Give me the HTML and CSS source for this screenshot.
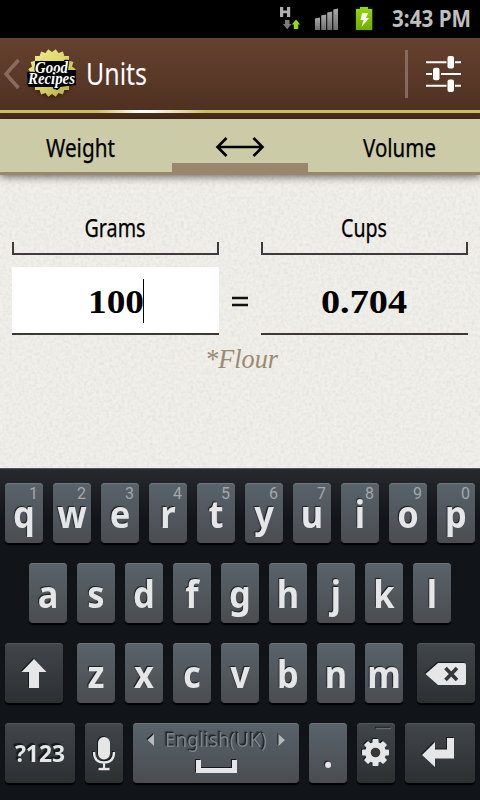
FILE: index.html
```
<!DOCTYPE html>
<html lang="en">
<head>
<meta charset="utf-8">
<title>Units</title>
<link rel="stylesheet" href="styles.css">
</head>
<body>
<div class="phone">
  <header class="status">
    <svg class="status-icons" width="112" height="38" viewBox="272 0 112 38">
      <defs>
        <linearGradient id="bars" x1="0" y1="0" x2="0" y2="1"><stop offset="0" stop-color="#aaa"/><stop offset="1" stop-color="#6e6e6e"/></linearGradient>
        <linearGradient id="batt" x1="0" y1="0" x2="0" y2="1"><stop offset="0" stop-color="#96d80c"/><stop offset="1" stop-color="#6fae00"/></linearGradient>
        <filter id="glow" x="-50%" y="-50%" width="200%" height="200%"><feGaussianBlur stdDeviation="1.500"/></filter>
      </defs>
      <path d="M280 7h3.200v3.600h3.800v-3.600h3.200v10h-3.200v-3.700h-3.800v3.700h-3.200z" fill="#b0b0b0"/>
      <path d="M285 20h4.500v4h2l-4.300 5.300-4.300-5.300h2.100z" fill="#7b7b7b"/>
      <path d="M296 19.500l4.200 5h-2v4.500h-4.400v-4.500h-2z" fill="#94dd00"/>
      <g fill="url(#bars)"><path d="M315 18.500l5-1v12.500h-5z"/><path d="M321.200 15.500l5-1v15.500h-5z"/><path d="M327.200 12.500l5-1v18.500h-5z"/><path d="M333.300 9.500l4.700-1v21.500h-4.700z"/></g>
      <rect x="356" y="8" width="16" height="22" fill="#5d9500" opacity=".4" filter="url(#glow)"/>
      <path d="M360 7h8v2h4.200v21h-16.200v-21h4z" fill="url(#batt)"/>
      <path d="M362 13h6l-2 5h3l-7.500 9 2-7h-3z" fill="#fff"/>
    </svg>
    <svg class="clock" width="96" height="38"><text x="8" y="27" textLength="79" lengthAdjust="spacingAndGlyphs">3:43 PM</text></svg>
  </header>

  <nav class="appbar">
    <svg class="home" width="84" height="72" viewBox="0 38 84 72">
      <defs>
        <linearGradient id="seal" x1="0" y1="0" x2="1" y2="1"><stop offset="0" stop-color="#f4ee98"/><stop offset=".5" stop-color="#dcd665"/><stop offset="1" stop-color="#aaa43c"/></linearGradient>
        <clipPath id="teeth">
          <rect x="35" y="56" width="34" height="34"/>
          <rect x="35" y="56" width="34" height="34" transform="rotate(18 52 73)"/>
          <rect x="35" y="56" width="34" height="34" transform="rotate(36 52 73)"/>
          <rect x="35" y="56" width="34" height="34" transform="rotate(54 52 73)"/>
          <rect x="35" y="56" width="34" height="34" transform="rotate(72 52 73)"/>
        </clipPath>
      </defs>
      <path d="M18.500 60l-12.500 14 12.500 14" fill="none" stroke="#886b5f" stroke-width="3.600"/>
      <circle cx="52" cy="76" r="22" fill="#2a1608" opacity=".5" filter="url(#glow)"/>
      <rect x="27" y="48" width="50" height="50" fill="url(#seal)" clip-path="url(#teeth)"/>
      <g class="brand">
        <path d="M36 62h31v9h8v13l-15 2-3 3-4-3H29l-1-13h8z" fill="#000" stroke="#000" stroke-width="2" stroke-linejoin="round"/>
        <text x="35" y="72.500" textLength="33" lengthAdjust="spacingAndGlyphs">Good</text>
        <text x="28" y="83.500" textLength="47" lengthAdjust="spacingAndGlyphs">Recipes</text>
      </g>
    </svg>
    <svg class="title" width="80" height="72"><text x="0" y="46.500" textLength="61" lengthAdjust="spacingAndGlyphs">Units</text></svg>
    <span class="divider"></span>
    <svg class="filter" width="36" height="38" viewBox="425 55 36 38">
      <path d="M426 62.200h20.500M455 62.200h6M426 74h6M441 74h20M426 85.800h20.500M455 85.800h6" stroke="#fff" stroke-width="2"/>
      <g fill="#fff"><rect x="447.500" y="56" width="6.500" height="12.500" rx="2"/><rect x="433" y="67.800" width="6.500" height="12.500" rx="2"/><rect x="447.500" y="79.500" width="6.500" height="12.500" rx="2"/></g>
    </svg>
  </nav>
  <div class="shine"></div>

  <section class="tabs">
    <div class="tab"><svg width="72" height="53"><text x="1" y="37.500" textLength="69" lengthAdjust="spacingAndGlyphs">Weight</text></svg></div>
    <div class="tab swap"><svg width="50" height="22" viewBox="0 0 50 22"><path d="M3 11h44M11.500 2l-9 9 9 9M38.500 2l9 9-9 9" fill="none" stroke="#000" stroke-width="2.600"/></svg></div>
    <div class="tab"><svg width="76" height="53"><text x="1" y="37.500" textLength="73" lengthAdjust="spacingAndGlyphs">Volume</text></svg></div>
  </section>

  <main class="converter">
    <svg class="paper" width="480" height="293">
      <filter id="grain" x="0" y="0" width="100%" height="100%"><feTurbulence type="fractalNoise" baseFrequency=".32" numOctaves="3" seed="4"/><feColorMatrix values="0 0 0 0 .5  0 0 0 0 .49  0 0 0 0 .45  .4 .2 0 0 -.24"/></filter>
      <rect width="480" height="293" filter="url(#grain)"/>
    </svg>
    <div class="row">
      <div class="unit"><svg width="66" height="42"><text x="1.500" y="27" textLength="61" lengthAdjust="spacingAndGlyphs">Grams</text></svg></div>
      <div class="unit"><svg width="48" height="42"><text x="0" y="27" textLength="46" lengthAdjust="spacingAndGlyphs">Cups</text></svg></div>
    </div>
    <div class="row values">
      <div class="value active"><svg width="56" height="66"><text x="0" y="46" textLength="56" lengthAdjust="spacingAndGlyphs">100</text></svg><i class="caret"></i></div>
      <svg class="equals" width="18" height="66"><path d="M1 31h16M1 38h16" stroke="#111" stroke-width="2.600"/></svg>
      <div class="value"><svg width="88" height="66"><text x="0" y="46" textLength="86" lengthAdjust="spacingAndGlyphs">0.704</text></svg></div>
    </div>
    <svg class="note" width="76" height="44"><text x="1" y="33" textLength="73" lengthAdjust="spacingAndGlyphs">*Flour</text></svg>
  </main>

  <section class="keyboard">
    <div class="keys">
      <div class="key"><sup>1</sup><b>q</b></div><div class="key"><sup>2</sup><b>w</b></div><div class="key"><sup>3</sup><b>e</b></div><div class="key"><sup>4</sup><b>r</b></div><div class="key"><sup>5</sup><b>t</b></div><div class="key"><sup>6</sup><b>y</b></div><div class="key"><sup>7</sup><b>u</b></div><div class="key"><sup>8</sup><b>i</b></div><div class="key"><sup>9</sup><b>o</b></div><div class="key"><sup>0</sup><b>p</b></div>
    </div>
    <div class="keys">
      <div class="key"><b>a</b></div><div class="key"><b>s</b></div><div class="key"><b>d</b></div><div class="key"><b>f</b></div><div class="key"><b>g</b></div><div class="key"><b>h</b></div><div class="key"><b>j</b></div><div class="key"><b>k</b></div><div class="key"><b>l</b></div>
    </div>
    <div class="keys">
      <div class="key dark shift"><svg width="58" height="60"><path d="M29 16l12.500 13h-7.500v16h-10v-16h-7.500z"/></svg></div>
      <div class="key"><b>z</b></div><div class="key"><b>x</b></div><div class="key"><b>c</b></div><div class="key"><b>v</b></div><div class="key"><b>b</b></div><div class="key"><b>n</b></div><div class="key"><b>m</b></div>
      <div class="key dark erase"><svg width="58" height="60"><path d="M8.500 31L21 20h26q2 0 2 2v18q0 2-2 2h-26z"/><path class="cut" d="M28.500 25l11.500 12M40 25l-11.500 12"/></svg></div>
    </div>
    <div class="keys">
      <div class="key dark wide"><svg width="70" height="60"><text class="mode" x="10" y="39" textLength="50" lengthAdjust="spacingAndGlyphs">?123</text></svg></div>
      <div class="key dark"><svg width="38" height="60"><rect x="13" y="14" width="12" height="22.500" rx="6"/><path class="line" d="M9 29q0 10.500 10 10.500t10-10.500M19 39v7M13.500 46h11"/></svg></div>
      <div class="key space"><svg width="166" height="60"><path class="arrow" d="M14.500 17l6.500-6v12zM152 17l-6.500-6v12z"/><path d="M63 37h5v8h31v-8h5v13h-41z"/></svg><svg class="label" width="166" height="34"><text class="lang" x="32" y="24" textLength="102" lengthAdjust="spacingAndGlyphs">English(UK)</text></svg></div>
      <div class="key"><b>.</b></div>
      <div class="key dark"><svg width="38" height="60">
        <path class="dash" d="M19 5.500h15"/>
        <g transform="translate(18.500 29.500)"><circle r="10.500"/><rect x="-3" y="-13.500" width="6" height="27" rx="1"/><rect x="-3" y="-13.500" width="6" height="27" rx="1" transform="rotate(45)"/><rect x="-3" y="-13.500" width="6" height="27" rx="1" transform="rotate(90)"/><rect x="-3" y="-13.500" width="6" height="27" rx="1" transform="rotate(135)"/><circle class="hub" r="4.800"/></g>
      </svg></div>
      <div class="key dark wide"><svg width="70" height="60"><path d="M17 32l13-13v7.500h12v-11.500h7v20.500h-19v8.500z"/></svg></div>
    </div>
  </section>
</div>
</body>
</html>
```
FILE: styles.css
```
* { box-sizing: border-box; }
body { margin: 0; background: #000; }
svg { display: block; flex: none; }
.phone { width: 480px; height: 800px; overflow: hidden; display: flex; flex-direction: column; font-family: "Noto Sans", sans-serif; }

.status { height: 38px; background: #000; display: flex; justify-content: flex-end; }
.clock text { font: bold 23px "Noto Sans", sans-serif; fill: #bebebe; }

.appbar { height: 72px; display: flex; align-items: center; background: linear-gradient(#66412f, #4f3121); }
.home { margin-right: 2px; }
.title text { font: 30.500px "Noto Sans", sans-serif; fill: #fff; }
.divider { width: 3px; height: 48px; margin-left: auto; background: #866a5d; }
.filter { margin: 0 19px 0 17px; }
.shine { height: 9px; border-bottom: 6px solid #4b2c1b; background: linear-gradient(90deg, #cbbf61 20%, #fff 29%, #fff 31%, #cbbf61 43%) #cbbf61; background-clip: padding-box; }

.tabs { height: 56px; display: grid; grid-template-columns: 172px 136px 172px; background: #cbcba8; position: relative; z-index: 1; box-shadow: 0 2px 8px rgba(0,0,0,.55); }
.tab { height: 56px; display: flex; justify-content: center; border-bottom: 3px solid #9a866c; }
.tab:first-child { padding-right: 11px; }
.tab:last-child { padding-left: 11px; }
.tab.swap { border-bottom-width: 12px; padding-top: 17px; }
.tab text, .unit text { font: 25.500px "Noto Sans", sans-serif; fill: #000; stroke: #000; stroke-width: .25px; }

.converter { height: 293px; background: #f1efe9; padding: 35px 12px 0; position: relative; }
.paper { position: absolute; left: 0; top: 0; }
.row { display: flex; justify-content: space-between; position: relative; }
.unit { width: 207px; height: 45px; display: flex; justify-content: center; border-bottom: 2px solid #403b38; background: linear-gradient(#403b38, #403b38) 0 100%/2px 11px no-repeat, linear-gradient(#403b38, #403b38) 100% 100%/2px 11px no-repeat; }
.values { margin-top: 12px; }
.value { width: 207px; height: 68px; display: flex; justify-content: center; border-bottom: 2px solid #3e3835; }
.value text { font: bold 34px "Liberation Serif", serif; fill: #000; }
.active { background: #fff; }
.caret { width: 1px; height: 44px; margin: 12px 0 0 -1px; background: #000; }
.note { margin: 0 auto; position: relative; left: 2px; }
.note text { font: italic 28px "Liberation Serif", serif; fill: #998a71; }

.keyboard { height: 332px; padding: 14px 5px 0; display: flex; flex-direction: column; gap: 20px; background: linear-gradient(#262a2e, #11151a 50px); border-top: 1px solid #555; }
.keys { display: flex; justify-content: center; gap: 10px; height: 60px; }
.key { width: 38px; height: 60px; flex: none; position: relative; border-radius: 4px; background: linear-gradient(#59636b, #494d51); box-shadow: inset 0 1px #6d767b, 0 2px 1px #000; color: #e5e6e7; text-align: center; text-shadow: -1px -1px 1px #181c20; }
.key b { display: block; font: bold 37px/62px "Noto Sans", sans-serif; transform: scaleX(.93); }
.key sup { position: absolute; right: 5px; top: 2px; font: 16px/18px Roboto, sans-serif; color: #a3a8ab; text-shadow: none; }
.key svg { fill: #e5e6e7; filter: drop-shadow(-1px -1px 0 #15191d); }
.dark { background: linear-gradient(#41464a, #2c3033); box-shadow: inset 0 1px #53575b, 0 2px 1px #000; }
.shift { width: 58px; margin-right: 4px; }
.erase { width: 58px; margin-left: 4px; }
.wide { width: 70px; }
.space { width: 166px; }
.key .label { position: absolute; left: 0; top: 0; filter: drop-shadow(-1px -1px 0 #3a4147); }
.cut { fill: none; stroke: #34383b; stroke-width: 3.600; }
.line { fill: none; stroke: #e5e6e7; stroke-width: 2.300; }
.arrow { fill: #b5babd; }
.hub { fill: #34383b; }
.dash { stroke: #64696d; stroke-width: 1.500; }
.mode { font: bold 23px "Noto Sans", sans-serif; }
.lang { font: 20px "Noto Sans", sans-serif; fill: #7d8589; }

.brand text { font: italic bold 17px "Liberation Serif", serif; fill: #fff; stroke: #000; stroke-width: 2.500px; stroke-linejoin: round; paint-order: stroke; }
```
